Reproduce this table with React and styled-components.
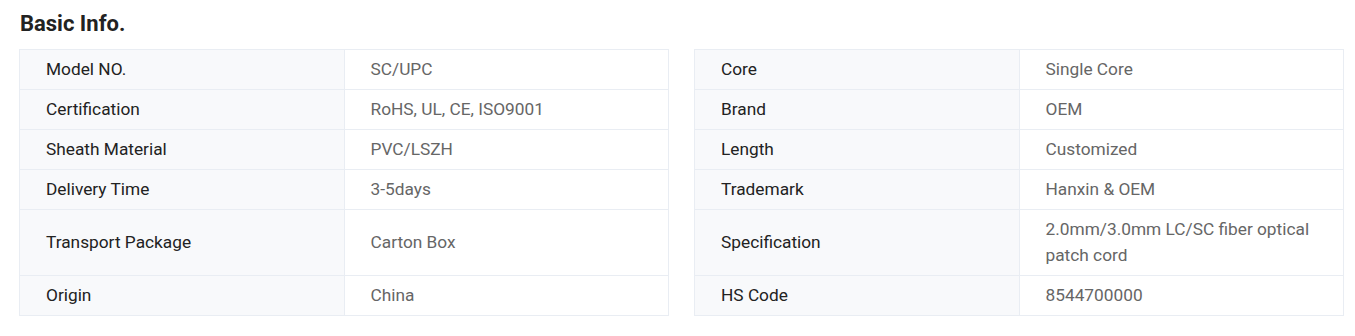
import React from "react";
import styled, { createGlobalStyle } from "styled-components";

const GlobalStyle = createGlobalStyle`
  * {
    box-sizing: border-box;
  }
  body {
    margin: 0;
    background: #fff;
    font-family: Roboto, "Liberation Sans", Arial, sans-serif;
  }
`;

const Section = styled.section`
  padding: 8px 11px 0 19px;
`;

const Title = styled.h2`
  margin: 0 0 0 1px;
  font-size: 22px;
  line-height: 32px;
  font-weight: 700;
  color: #222;
`;

const Rows = styled.div`
  margin-top: 9px;
`;

const Row = styled.div`
  display: grid;
  grid-template-columns: 1fr 1fr;
  column-gap: 25px;
`;

const Pair = styled.div`
  display: grid;
  grid-template-columns: 1fr 1fr;
  border-left: 1px solid #e9edf3;
  border-top: ${(p) => (p.$first ? "1px solid #e9edf3" : "none")};
`;

const Cell = styled.div`
  display: flex;
  align-items: center;
  padding: 6px 26px 7px;
  border-right: 1px solid #e9edf3;
  border-bottom: 1px solid #e9edf3;
  font-size: 17.3px;
  line-height: 26px;
  color: ${(p) => (p.$label ? "#222" : "#666")};
  background: ${(p) => (p.$label ? "#f8f9fb" : "#fff")};
`;

const rows = [
  [["Model NO.", "SC/UPC"], ["Core", "Single Core"]],
  [["Certification", "RoHS, UL, CE, ISO9001"], ["Brand", "OEM"]],
  [["Sheath Material", "PVC/LSZH"], ["Length", "Customized"]],
  [["Delivery Time", "3-5days"], ["Trademark", "Hanxin & OEM"]],
  [
    ["Transport Package", "Carton Box"],
    ["Specification", "2.0mm/3.0mm LC/SC fiber optical patch cord"],
  ],
  [["Origin", "China"], ["HS Code", "8544700000"]],
];

export default function App() {
  return (
    <>
      <GlobalStyle />
      <Section>
        <Title>Basic Info.</Title>
        <Rows>
          {rows.map((row, i) => (
            <Row key={i}>
              {row.map(([k, v]) => (
                <Pair key={k} $first={i === 0}>
                  <Cell $label>{k}</Cell>
                  <Cell>{v}</Cell>
                </Pair>
              ))}
            </Row>
          ))}
        </Rows>
      </Section>
    </>
  );
}
